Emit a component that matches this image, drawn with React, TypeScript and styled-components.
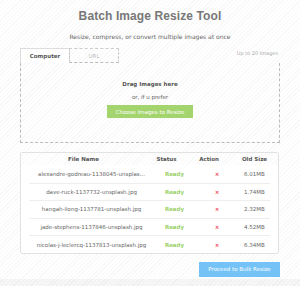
import React, { FC } from 'react';
import styled, { createGlobalStyle } from 'styled-components';

const HATCH = 'repeating-linear-gradient(135deg, #ffffff 0px, #ffffff 2px, #f8f8f8 2px, #f8f8f8 3px)';

type FileRow = {
  name: string,
  size: string,
};

const FILES: Array<FileRow> = [
  { name: 'alexandre-godreau-1138045-unsplas...', size: '6.01MB' },
  { name: 'dave-ruck-1137732-unsplash.jpg', size: '1.74MB' },
  { name: 'hangah-liong-1137781-unsplash.jpg', size: '2.32MB' },
  { name: 'jade-stephens-1137846-unsplash.jpg', size: '4.52MB' },
  { name: 'nicolas-j-leclercq-1137813-unsplash.jpg', size: '6.34MB' },
];

const GlobalStyle = createGlobalStyle`
  html, body {
    margin: 0;
    padding: 0;
    background: ${HATCH};
    font-family: 'DejaVu Sans', 'Noto Sans', sans-serif;
    color: #666;
  }
`;

const Page = styled.div`
  display: flex;
  flex-direction: column;
  width: 300px;
  height: 286px;
  overflow: hidden;
`;

const Title = styled.h1`
  margin: 9px 0 0 0;
  font-family: 'Liberation Sans', Arial, sans-serif;
  font-size: 12px;
  line-height: 14px;
  font-weight: bold;
  letter-spacing: 0.1px;
  text-align: center;
  color: #777;
`;

const Subtitle = styled.p`
  margin: 10px 0 0 0;
  font-size: 6px;
  line-height: 8px;
  text-align: center;
  color: #666;
`;

const Uploader = styled.div`
  display: flex;
  flex-direction: column;
  margin: 7px 20px 0 20px;
`;

const TabsRow = styled.div`
  display: flex;
  flex-direction: row;
  align-items: flex-end;
  height: 15px;
`;

const Tab = styled.div<{ $active?: boolean }>`
  display: flex;
  align-items: center;
  justify-content: center;
  width: 50px;
  height: 15px;
  box-sizing: border-box;
  font-size: 5.5px;
  font-weight: ${(p) => (p.$active ? 'bold' : 'normal')};
  color: ${(p) => (p.$active ? '#555' : '#bbb')};
  background: ${(p) => (p.$active ? '#fff' : 'transparent')};
  border: 1px ${(p) => (p.$active ? 'solid #ddd' : 'dashed #ccc')};
  border-bottom: ${(p) => (p.$active ? 'none' : '1px dashed #bbb')};
  margin-right: -1px;
`;

const Hint = styled.div`
  flex: 1;
  align-self: center;
  text-align: right;
  padding-right: 2px;
  font-size: 5px;
  color: #aaa;
  margin-top: -5px;
`;

const DropZone = styled.div`
  display: flex;
  flex-direction: column;
  align-items: center;
  height: 80px;
  box-sizing: border-box;
  border: 1px dashed #bbb;
  border-top: none;
`;

const DropTitle = styled.div`
  margin-top: 18px;
  font-size: 5.5px;
  font-weight: bold;
  color: #555;
`;

const DropAlt = styled.div`
  margin-top: 7px;
  font-size: 5.5px;
  color: #666;
`;

const ChooseButton = styled.button`
  margin-top: 5px;
  width: 86px;
  height: 13px;
  border: none;
  padding: 0;
  background: #a4d46e;
  color: #fff;
  font-family: inherit;
  font-size: 5.5px;
`;

const TableCard = styled.div`
  margin: 9px 21px 0 20px;
  border: 1px solid #e2e2e2;
  border-radius: 2px;
  background: #fff;
`;

const Grid = styled.div`
  display: grid;
  grid-template-columns: 125px 41px 44px 1fr;
  align-items: center;
`;

const HeadRow = styled(Grid)`
  height: 12px;
  background: ${HATCH};
  font-size: 5.5px;
  font-weight: bold;
  color: #555;
`;

const BodyRow = styled(Grid)`
  height: 17.6px;
  box-sizing: border-box;
  margin: 0 8px;
  font-size: 5.5px;
  color: #666;

  & + & {
    border-top: 1px solid #eee;
  }
`;

const Cell = styled.div<{ $tone?: 'ok' | 'bad' }>`
  text-align: center;
  white-space: nowrap;
  overflow: hidden;
  color: ${(p) => (p.$tone === 'ok' ? '#9bd16a' : p.$tone === 'bad' ? '#ee4050' : 'inherit')};
  font-weight: ${(p) => (p.$tone ? 'bold' : 'inherit')};
`;

const Actions = styled.div`
  display: flex;
  justify-content: flex-end;
  margin: 8px 20px 0 20px;
`;

const ProceedButton = styled.button`
  width: 81px;
  height: 15px;
  border: none;
  padding: 0;
  background: #74c2f6;
  color: #fff;
  font-family: inherit;
  font-size: 5.5px;
`;

const Footer = styled.div`
  flex: 1;
  margin-top: 2px;
  background: repeating-linear-gradient(135deg, #f7f7f7 0px, #f7f7f7 2px, #efefef 2px, #efefef 3px);
`;

const FilesTable: FC<{ items: Array<FileRow> }> = (props) => {
  return (
    <TableCard>
      <HeadRow>
        <Cell>File Name</Cell>
        <Cell>Status</Cell>
        <Cell>Action</Cell>
        <Cell>Old Size</Cell>
      </HeadRow>
      {props.items.map((o, i) => {
        return (
          <BodyRow key={i}>
            <Cell>{o.name}</Cell>
            <Cell $tone="ok">Ready</Cell>
            <Cell $tone="bad">×</Cell>
            <Cell>{o.size}</Cell>
          </BodyRow>
        );
      })}
    </TableCard>
  );
};

export default function App() {
  return (
    <Page>
      <GlobalStyle/>
      <Title>Batch Image Resize Tool</Title>
      <Subtitle>Resize, compress, or convert multiple images at once</Subtitle>
      <Uploader>
        <TabsRow>
          <Tab $active>Computer</Tab>
          <Tab>URL</Tab>
          <Hint>Up to 20 Images</Hint>
        </TabsRow>
        <DropZone>
          <DropTitle>Drag Images here</DropTitle>
          <DropAlt>or, if u prefer</DropAlt>
          <ChooseButton>Choose Images to Resize</ChooseButton>
        </DropZone>
      </Uploader>
      <FilesTable items={FILES}/>
      <Actions>
        <ProceedButton>Proceed to Bulk Resize</ProceedButton>
      </Actions>
      <Footer/>
    </Page>
  );
}
